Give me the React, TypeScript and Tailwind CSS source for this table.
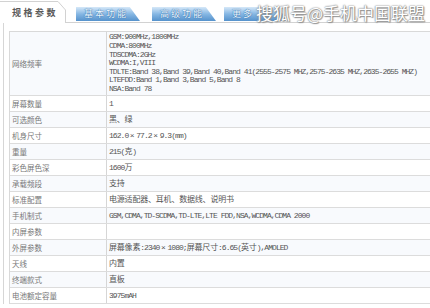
import React from "react";

const rows: { label: string; value: string | string[] }[] = [
  {
    label: "网络频率",
    value: [
      "GSM:900MHz,1800MHz",
      "CDMA:800MHz",
      "TDSCDMA:2GHz",
      "WCDMA:I,VIII",
      "TDLTE:Band 38,Band 39,Band 40,Band 41(2555-2575 MHZ,2575-2635 MHZ,2635-2655 MHZ)",
      "LTEFDD:Band 1,Band 3,Band 5,Band 8",
      "NSA:Band 78",
    ],
  },
  { label: "屏幕数量", value: "1" },
  { label: "可选颜色", value: "黑、绿" },
  { label: "机身尺寸", value: "162.0×77.2×9.3(mm)" },
  { label: "重量", value: "215(克)" },
  { label: "彩色屏色深", value: "1600万" },
  { label: "承载频段", value: "支持" },
  { label: "标准配置", value: "电源适配器、耳机、数据线、说明书" },
  { label: "手机制式", value: "GSM,CDMA,TD-SCDMA,TD-LTE,LTE FDD,NSA,WCDMA,CDMA 2000" },
  { label: "内屏参数", value: "" },
  { label: "外屏参数", value: "屏幕像素:2340×1080;屏幕尺寸:6.65(英寸),AMOLED" },
  { label: "天线", value: "内置" },
  { label: "终端款式", value: "直板" },
  { label: "电池额定容量", value: "3975mAH" },
];

function Mixed({ text }: { text: string }) {
  const parts = text.split(/([\x00-\x7f]+|×)/).filter((p) => p.length > 0);
  return (
    <>
      {parts.map((p, i) => {
        if (p === "×")
          return (
            <span key={i} className="inline-block w-[8px] text-center tracking-normal">
              ×
            </span>
          );
        if (/^[\x00-\x7f]+$/.test(p))
          return (
            <span key={i} className="tracking-[-0.95px]">
              {p}
            </span>
          );
        return (
          <span key={i} className="tracking-[-0.2px]">
            {p}
          </span>
        );
      })}
    </>
  );
}

function BlueTab({ text, className }: { text: string; className: string }) {
  return (
    <div
      className={`h-[14px] w-[64px] flex items-center pl-[8px] text-[9px] tracking-[2px] text-[#eef7ff] bg-gradient-to-b from-[#d6e8f8] via-[#86b7e3] to-[#5592cc] [clip-path:polygon(0_0,84%_0,100%_100%,0_100%)] [text-shadow:0_0_1px_#2a6aa6,0_0_1px_#2a6aa6] ${className}`}
      style={{ fontFamily: '"Noto Sans CJK SC", sans-serif' }}
    >
      {text}
    </div>
  );
}

export default function App() {
  return (
    <div
      className="relative w-[430px] h-[308px] overflow-hidden bg-white"
      style={{ fontFamily: '"Noto Sans CJK SC", sans-serif' }}
    >
      {/* tab header */}
      <div className="flex h-[23px]">
        <div className="relative w-[66px] h-[23px] flex items-center pl-[12px] pt-[3px]">
          <svg className="absolute left-0 top-0" width="67" height="23" viewBox="0 0 67 23">
            <path d="M0 1.5 H58 L65.5 10 V23" fill="none" stroke="#d2d2d2" strokeWidth="1" />
          </svg>
          <span className="relative text-[9px] font-bold tracking-[2.5px] text-[#5a5a5a]">规格参数</span>
        </div>
        <div className="flex-1 flex items-end border-b border-[#d2d2d2] pb-[1px]">
          <BlueTab text="基本功能" className="ml-[10px]" />
          <BlueTab text="高级功能" className="ml-[12px]" />
          <BlueTab text="更多" className="ml-[8px]" />
        </div>
      </div>

      {/* watermark */}
      <div
        className="absolute left-[256px] top-[1px] text-[17px] leading-[24px] text-white [text-shadow:0_0_1px_#777,0_0_2px_#888,1px_1px_1px_#999]"
        style={{ fontFamily: '"Noto Sans CJK SC", sans-serif' }}
      >
        搜狐号@手机中国联盟
      </div>

      {/* body */}
      <div className="ml-[3px] border-l border-[#d6d6d6] pl-[5px] pt-[8px]">
        <div className="w-[440px] border-t border-l border-[#d9d9d9]">
          {rows.map((r, i) => (
            <div
              key={r.label}
              className={`flex border-b border-[#dcdcdc] ${i % 2 === 0 ? "bg-[#f8fafd]" : "bg-white"} ${i === 0 ? "h-[64px]" : "h-[16px]"}`}
            >
              <div className="w-[97px] shrink-0 border-r border-[#d6d6d6] flex items-center pl-[2px] text-[7.5px] text-[#777]">
                {r.label}
              </div>
              <div
                className="flex-1 flex flex-col justify-center pl-[2px] text-[8px] text-[#555] whitespace-nowrap"
                style={{ fontFamily: '"Liberation Mono", "Noto Sans CJK SC", monospace' }}
              >
                {Array.isArray(r.value) ? (
                  r.value.map((v) => (
                    <div key={v} className="leading-[8.6px]">
                      <Mixed text={v} />
                    </div>
                  ))
                ) : (
                  <div className="leading-[10px]">
                    <Mixed text={r.value} />
                  </div>
                )}
              </div>
            </div>
          ))}
        </div>
      </div>
    </div>
  );
}
